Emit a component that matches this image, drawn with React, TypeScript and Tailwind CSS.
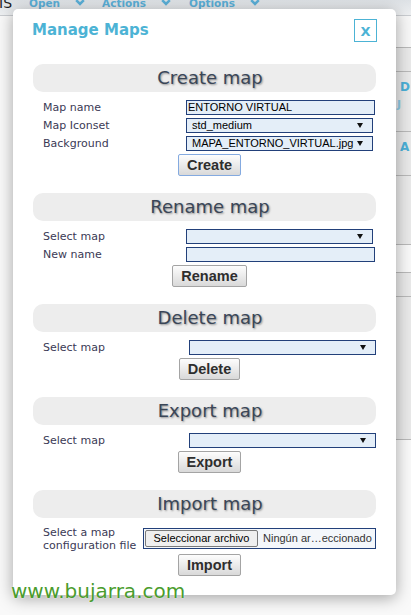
import React from "react";

const arial = "font-['Liberation_Sans',Arial,sans-serif]";

function Chevron() {
  return (
    <svg width="10" height="7" viewBox="0 0 10 7" className="ml-[15px] mt-[1px] shrink-0">
      <path d="M1.2 1.2 L5 5 L8.8 1.2" fill="none" stroke="#5aaed6" strokeWidth="2.6" />
    </svg>
  );
}

function Arrow() {
  return (
    <svg width="6" height="5" viewBox="0 0 6 5" className="mr-[9px] shrink-0">
      <path d="M0 0H6L3 5Z" fill="#111" />
    </svg>
  );
}

function Select({ value = "", wide = "w-[187px]" }: { value?: string; wide?: string }) {
  return (
    <div
      className={`flex h-[15px] items-center border border-[#22407a] bg-[#e4eef8] pl-[5px] text-[11px] leading-none text-black ${arial} ${wide}`}
    >
      <span className="flex-1 truncate">{value}</span>
      <Arrow />
    </div>
  );
}

function TextBox({ value = "" }: { value?: string }) {
  return (
    <div
      className={`flex h-[15px] w-[189px] items-center border border-[#22407a] bg-[#e4eef8] pl-[1px] text-[11px] leading-none text-black ${arial}`}
    >
      {value}
    </div>
  );
}

function Label({ children }: { children: React.ReactNode }) {
  return <div className="flex items-center pl-[10px] text-[11px] leading-none text-[#3b3a55]">{children}</div>;
}

function Btn({ children, focused = false }: { children: React.ReactNode; focused?: boolean }) {
  return (
    <button
      className={`h-[22px] rounded-[2px] bg-gradient-to-b from-[#fdfdfd] to-[#d9d9d9] px-[8px] text-[14.5px] font-bold leading-none text-[#2e2e2e] ${arial} ${
        focused ? "border-[1.5px] border-[#84aae0]" : "border border-[#a4a4a4]"
      }`}
    >
      {children}
    </button>
  );
}

function Heading({ title }: { title: string }) {
  return (
    <div className="flex h-[28px] items-center justify-center rounded-[10px] bg-[#ededed] pl-[11px] text-[18px] leading-none text-[#3a4657] [text-shadow:1px_1px_2px_rgba(0,0,0,0.4)]">
      {title}
    </div>
  );
}

function Section({
  title,
  button,
  focused,
  first,
  children,
  rowsClass,
  rowsTop = "mt-[8px]",
  btnTop = "mt-[3px]",
}: {
  title: string;
  button: string;
  focused?: boolean;
  first?: boolean;
  children: React.ReactNode;
  rowsClass: string;
  rowsTop?: string;
  btnTop?: string;
}) {
  return (
    <section className={first ? "" : "mt-[17px]"}>
      <Heading title={title} />
      <div className={`grid gap-y-[3px] ${rowsTop} ${rowsClass}`}>{children}</div>
      <div className={`flex justify-center pl-[10px] ${btnTop}`}>
        <Btn focused={focused}>{button}</Btn>
      </div>
    </section>
  );
}

function StripRow({ h, bg = "bg-[#e9e9e9]", children }: { h: string; bg?: string; children?: React.ReactNode }) {
  return <div className={`relative border-t border-[#b9b9b9] ${h} ${bg}`}>{children}</div>;
}

export default function App() {
  return (
    <div className="relative h-[615px] w-[411px] overflow-hidden bg-[#f8f8f8] font-['DejaVu_Sans',Verdana,sans-serif]">
      {/* page behind the dialog */}
      <header className="flex h-[16px] items-start overflow-hidden border-b border-[#c9ccd0] bg-gradient-to-b from-[#dde1e5] to-[#eef0f2]">
        <span className="-ml-[1px] -mt-[4px] w-[30px] text-[14px] leading-none text-[#1e1e1e]">IS</span>
        <nav className="-mt-[2px] flex items-start text-[10.5px] font-bold leading-none text-[#5aaed6]">
          <span>Open</span>
          <Chevron />
          <span className="ml-[17px]">Actions</span>
          <Chevron />
          <span className="ml-[18px]">Options</span>
          <Chevron />
        </nav>
      </header>
      <div className="flex h-[599px]">
        <div className="flex-1 bg-[#f9f9f9]" />
        <div className="flex w-[15px] flex-col">
          <div className="h-[31px] bg-[#f7f7f7]" />
          <StripRow h="h-[24px]" />
          <StripRow h="h-[60px]">
            <span className="absolute left-[4px] top-[9px] text-[12px] font-bold leading-none text-[#4bb0d8]">D</span>
            <span className="absolute left-[1px] top-[27px] text-[11px] font-bold leading-none text-[#8ccbe6]">J</span>
          </StripRow>
          <StripRow h="h-[44px]">
            <span className="absolute left-[4px] top-[9px] text-[12px] font-bold leading-none text-[#4bb0d8]">A</span>
          </StripRow>
          <StripRow h="h-[69px]" />
          <StripRow h="h-[28px]" bg="bg-[#f8f8f8]" />
          <StripRow h="h-[24px]" />
          <StripRow h="h-[143px]" />
          <div className="flex-1 border-t border-[#b9b9b9] bg-[#f9f9f9]" />
        </div>
      </div>

      {/* Manage Maps dialog */}
      <div className="absolute left-[13px] top-[9px] w-[383px] rounded-[5px] bg-white pb-[19px] shadow-[0_3px_16px_rgba(0,0,0,0.35)]">
        <div className="flex items-center justify-between px-[19px] pt-[10px]">
          <h1 className="text-[15px] font-bold leading-none text-[#4cb3d5]">Manage Maps</h1>
          <div className="flex h-[23px] w-[23px] items-center justify-center border-[1.5px] border-[#4cb3d5] pt-[2px] text-[13px] font-bold leading-none text-[#4cb3d5]">
            X
          </div>
        </div>

        <div className="mt-[22px] px-[20px]">
          <Section title="Create map" button="Create" focused first rowsClass="grid-cols-[153px_189px]">
            <Label>Map name</Label>
            <TextBox value="ENTORNO VIRTUAL" />
            <Label>Map Iconset</Label>
            <Select value="std_medium" />
            <Label>Background</Label>
            <Select value="MAPA_ENTORNO_VIRTUAL.jpg" />
          </Section>

          <Section title="Rename map" button="Rename" rowsClass="grid-cols-[153px_189px]">
            <Label>Select map</Label>
            <Select />
            <Label>New name</Label>
            <TextBox />
          </Section>

          <Section title="Delete map" button="Delete" rowsClass="grid-cols-[156px_187px]">
            <Label>Select map</Label>
            <Select />
          </Section>

          <Section title="Export map" button="Export" rowsClass="grid-cols-[156px_187px]">
            <Label>Select map</Label>
            <Select />
          </Section>

          <Section
            title="Import map"
            button="Import"
            rowsClass="grid-cols-[110px_233px]"
            rowsTop="mt-[10px]"
            btnTop="mt-[5px]"
          >
            <div className="flex h-[21px] items-center pl-[10px] text-[11px] leading-[13px] text-[#3b3a55]">
              <span>
                Select a map
                <br />
                configuration file
              </span>
            </div>
            <div className={`flex h-[21px] items-center border border-[#22407a] bg-[#f4f7fb] pl-[1px] text-[11px] leading-none ${arial}`}>
              <span className="flex h-[17px] w-[113px] items-center justify-center rounded-[2px] border border-[#7a7a7a] bg-[#efefef] text-black">
                Seleccionar archivo
              </span>
              <span className="ml-[5px] text-[#333]">Ningún ar…eccionado</span>
            </div>
          </Section>
        </div>
      </div>

      {/* watermark */}
      <div className="absolute left-[11px] top-[581px] text-[20px] leading-[20px] text-[#4a9c2d] [text-shadow:0_0_2px_rgba(255,255,255,0.9)]">
        www.bujarra.com
      </div>
    </div>
  );
}
